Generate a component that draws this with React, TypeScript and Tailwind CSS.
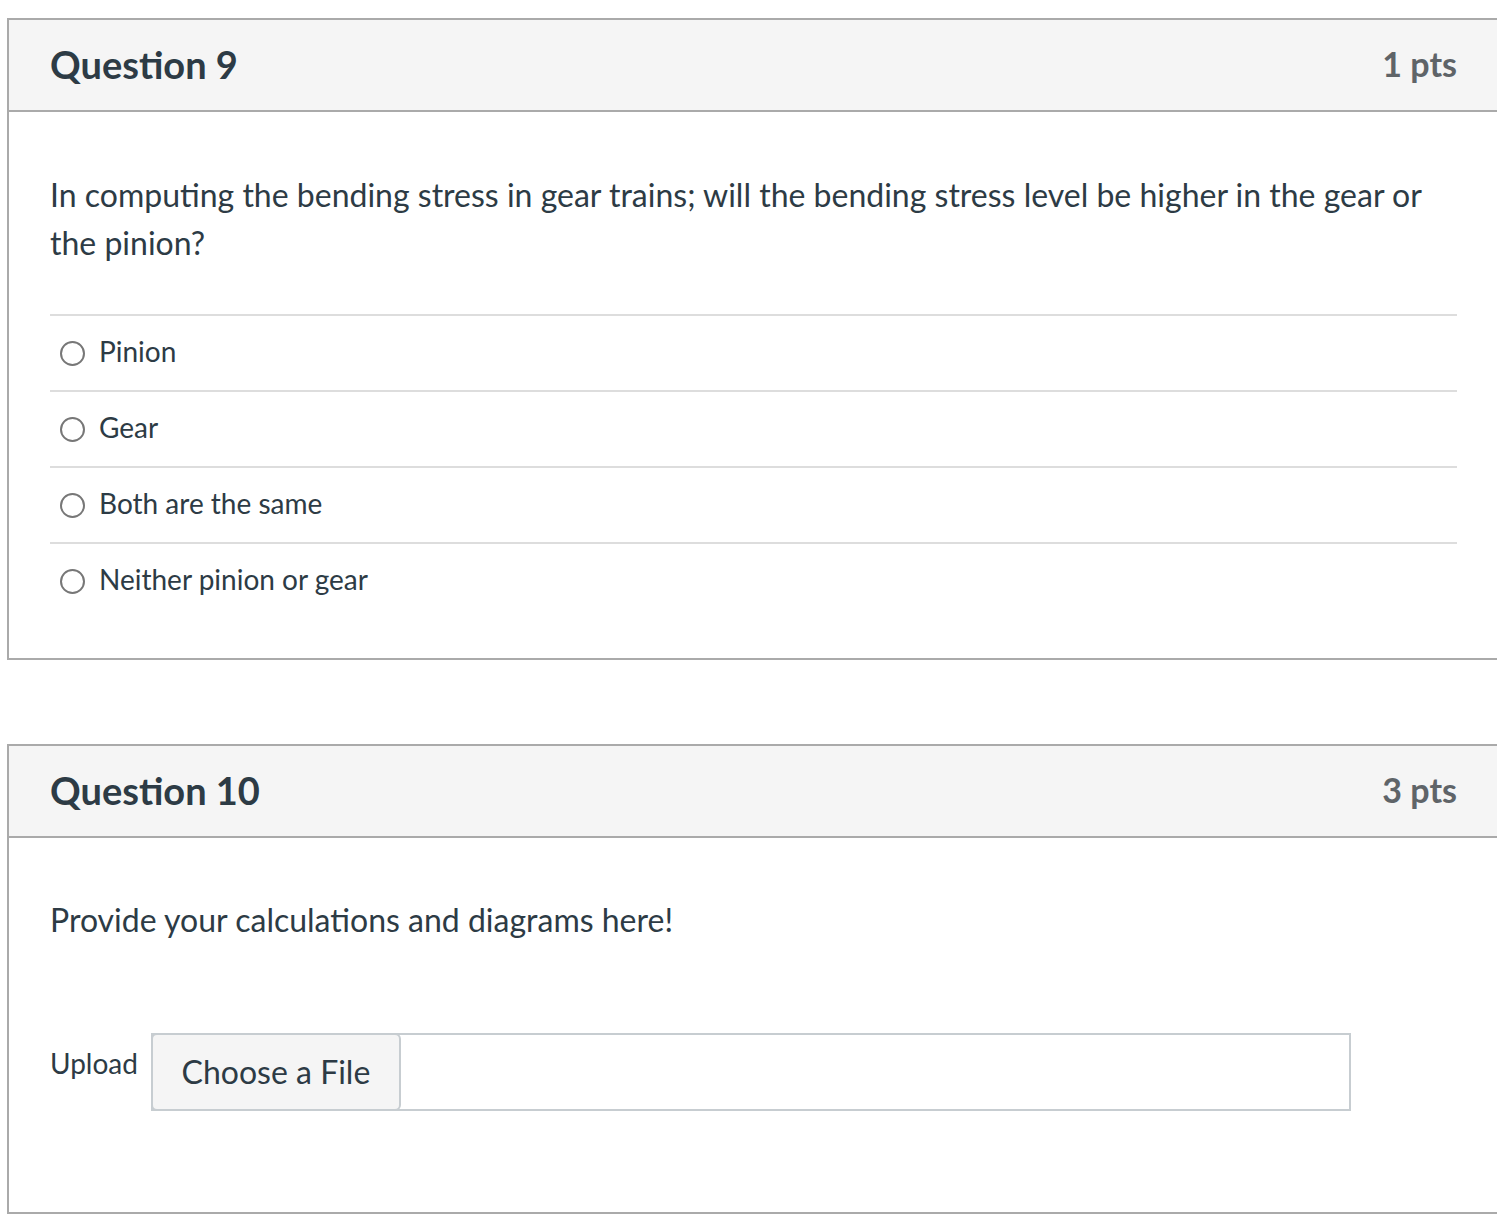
import React from "react";

const options = ["Pinion", "Gear", "Both are the same", "Neither pinion or gear"];

function Header({ title, pts }: { title: string; pts: string }) {
  return (
    <div className="flex h-[92px] items-center justify-between border-b-2 border-[#aaaaaa] bg-[#f5f5f5] pb-[2px] pl-[41px] pr-[40px]">
      <h2 className="text-[38px] font-bold leading-none text-[#2d3b45]">{title}</h2>
      <div className="text-[34px] font-bold leading-none text-[#5f6468]">{pts}</div>
    </div>
  );
}

export default function App() {
  return (
    <div
      className="w-full overflow-hidden bg-white pt-[18px]"
      style={{ fontFamily: "Lato, 'Noto Sans', sans-serif" }}
    >
      <div className="ml-[7px] w-[1492px] border-2 border-[#aaaaaa]">
        <Header title="Question 9" pts="1 pts" />
        <div className="pb-[40px] pl-[41px] pr-[40px] pt-[59px] text-[#2d3b45]">
          <p className="text-[32px] leading-[48px]">
            In computing the bending stress in gear trains; will the bending stress level be higher in the gear or the pinion?
          </p>
          <div className="mt-[47px]">
            {options.map((o) => (
              <div key={o} className="flex h-[76px] items-center border-t-2 border-[#dddddd]">
                <span className="ml-[10px] mr-[14px] box-border h-[25px] w-[25px] rounded-full border-2 border-[#777777] bg-white" />
                <span className="pb-[4px] text-[28px] leading-none">{o}</span>
              </div>
            ))}
          </div>
        </div>
      </div>

      <div className="ml-[7px] mt-[84px] w-[1492px] border-2 border-[#aaaaaa]">
        <Header title="Question 10" pts="3 pts" />
        <div className="pb-[101px] pl-[41px] pr-[40px] pt-[58px] text-[#2d3b45]">
          <p className="text-[32px] leading-[48px]">Provide your calculations and diagrams here!</p>
          <div className="mt-[89px] flex items-start">
            <span className="mr-[13px] pt-[13px] text-[28px] leading-[34px]">Upload</span>
            <div className="relative flex h-[78px] w-[1200px] border-2 border-[#c7cdd1] bg-white">
              <div className="absolute -left-[2px] -top-[2px] flex h-[78px] w-[250px] items-center justify-center rounded-[6px] border-2 border-[#c7cdd1] bg-[#f5f5f5] text-[32px] text-[#2d3b45]">
                Choose a File
              </div>
            </div>
          </div>
        </div>
      </div>
    </div>
  );
}
